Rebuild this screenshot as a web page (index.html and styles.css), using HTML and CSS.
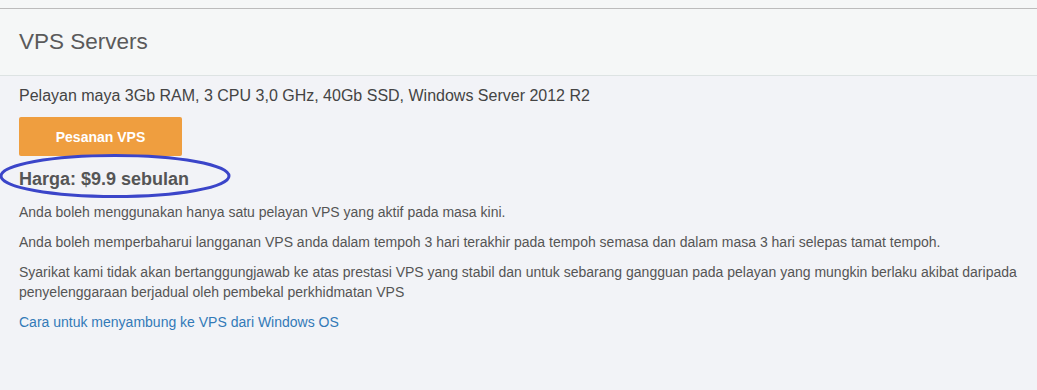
FILE: index.html
```html
<!DOCTYPE html>
<html lang="ms">
<head>
    <meta charset="UTF-8">
    <meta name="viewport" content="width=device-width, initial-scale=1.0">
    <title>VPS Servers</title>
    <link rel="stylesheet" href="styles.css">
</head>
<body>
    <div class="topbar"></div>

    <div class="panel-heading">
        <h2>VPS Servers</h2>
    </div>

    <div class="panel-body">
        <p class="spec">Pelayan maya 3Gb RAM, 3 CPU 3,0 GHz, 40Gb SSD, Windows Server 2012 R2</p>

        <button class="order">Pesanan VPS</button>

        <div class="price">
            Harga: $9.9 sebulan
            <svg class="circle" width="234" height="46" viewBox="0 0 234 46">
                <ellipse cx="115" cy="22" rx="114" ry="20.5" fill="none" stroke="#3b45c9" stroke-width="3"/>
            </svg>
        </div>

        <p>Anda boleh menggunakan hanya satu pelayan VPS yang aktif pada masa kini.</p>
        <p>Anda boleh memperbaharui langganan VPS anda dalam tempoh 3 hari terakhir pada tempoh semasa dan dalam masa 3 hari selepas tamat tempoh.</p>
        <p>Syarikat kami tidak akan bertanggungjawab ke atas prestasi VPS yang stabil dan untuk sebarang gangguan pada pelayan yang mungkin berlaku akibat daripada penyelenggaraan berjadual oleh pembekal perkhidmatan VPS</p>
        <p><a href="#">Cara untuk menyambung ke VPS dari Windows OS</a></p>
    </div>
</body>
</html>
```

FILE: styles.css
```css
body {
    margin: 0;
    font-family: "Liberation Sans", Arial, sans-serif;
    background-color: #f2f3f7;
    color: #555;
}
.topbar {
    height: 8px;
    background-color: #f5f7f7;
    border-bottom: 1px solid #bcbcbc;
}
.panel-heading {
    height: 66px;
    padding: 0 19px;
    background-color: #f5f7f7;
    border-bottom: 1px solid #dde3e3;
    display: flex;
    align-items: center;
}
.panel-heading h2 {
    margin: 0;
    font-size: 22.5px;
    font-weight: normal;
    color: #5a5a5a;
}
.panel-body {
    padding: 9px 19px 0;
    font-size: 14px;
    line-height: 20px;
}
.spec {
    margin: 0 0 10px;
    font-size: 16px;
    line-height: 22px;
    color: #444;
}
.order {
    display: block;
    width: 163px;
    height: 39px;
    border: none;
    border-radius: 2px;
    background-color: #ef9e3f;
    color: #fff;
    font-family: inherit;
    font-size: 14px;
    font-weight: bold;
    cursor: pointer;
}
.price {
    position: relative;
    margin: 10px 0 10px;
    font-size: 18px;
    font-weight: bold;
    line-height: 26px;
    color: #555;
}
.circle {
    position: absolute;
    left: -19px;
    top: -12px;
}
p {
    margin: 0 0 10px;
}
a {
    color: #337ab7;
    text-decoration: none;
}
```
